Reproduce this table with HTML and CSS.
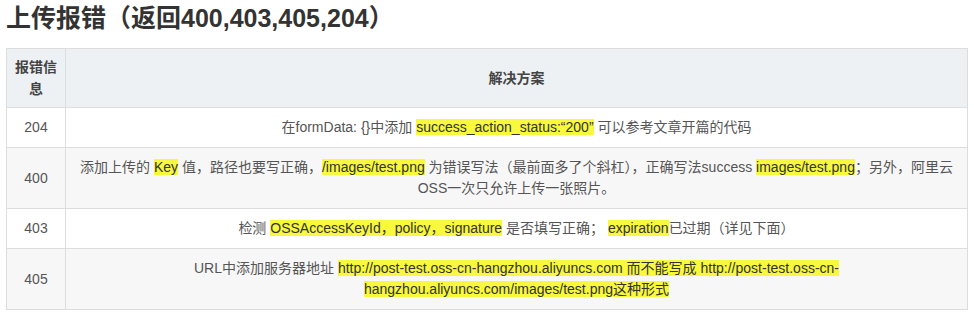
FILE: index.html
```html
<!DOCTYPE html>
<html lang="zh">
<head>
<meta charset="utf-8">
<link rel="stylesheet" href="styles.css">
</head>
<body>
<div class="page">
  <h2 class="title">上传报错（返回400,403,405,204）</h2>
  <table class="err-table">
    <colgroup><col class="c1"><col class="c2"></colgroup>
    <thead>
      <tr><th>报错信息</th><th>解决方案</th></tr>
    </thead>
    <tbody>
      <tr><td>204</td><td>在formData: {}中添加 <mark>success_action_status:“200”</mark> 可以参考文章开篇的代码</td></tr>
      <tr><td>400</td><td>添加上传的 <mark>Key</mark> 值，路径也要写正确，<mark>/images/test.png</mark> 为错误写法（最前面多了个斜杠），正确写法success <mark>images/test.png</mark>；另外，阿里云OSS一次只允许上传一张照片。</td></tr>
      <tr><td>403</td><td>检测 <mark>OSSAccessKeyId，policy，signature</mark> 是否填写正确； <mark>expiration</mark>已过期（详见下面）</td></tr>
      <tr><td>405</td><td>URL中添加服务器地址 <mark>http://post-test.oss-cn-hangzhou.aliyuncs.com 而不能写成 http://post-test.oss-cn-hangzhou.aliyuncs.com/images/test.png这种形式</mark></td></tr>
    </tbody>
  </table>
</div>
</body>
</html>
```
FILE: styles.css
```css
html, body { margin: 0; padding: 0; background: #fff; }
.page {
  padding: 0 6px;
  font-family: "Liberation Sans", Arial, "Noto Sans CJK SC", sans-serif;
  color: #555;
}
.title {
  margin: 0 0 12px;
  font-size: 25px;
  line-height: 36px;
  font-weight: bold;
  color: #333;
}
.err-table {
  width: 962px;
  border-collapse: collapse;
  table-layout: fixed;
  font-size: 14px;
}
.c1 { width: 59px; }
.err-table th, .err-table td {
  border: 1px solid #ddd;
  text-align: center;
  vertical-align: middle;
  padding: 9px 8px;
  line-height: 21px;
}
.err-table th {
  background: #eef1f4;
  font-weight: bold;
  font-size: 14px;
  line-height: 22px;
  color: #444;
  padding: 7px 8px;
}
.err-table tbody tr:nth-child(even) { background: #f7f7f7; }
.err-table tbody tr:nth-child(odd) { background: #fff; }
mark {
  background: #f8f83c;
  color: #333;
}
```
